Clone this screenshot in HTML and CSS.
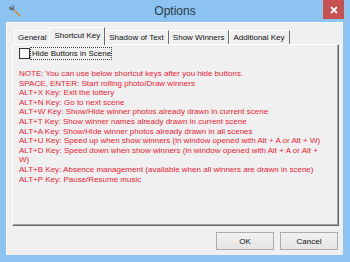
FILE: index.html
```html
<!DOCTYPE html>
<html>
<head>
<meta charset="utf-8">
<link rel="stylesheet" href="styles.css">
</head>
<body>
<div class="window">
  <div class="titlebar">
    <div class="tb-left">
      <svg class="app-icon" width="12" height="12" viewBox="0 0 12 12">
        <path d="M1.2 1.2 L3 3 L4.2 1.8 L2.4 0 C3.6 -0.2 5.2 0.8 5.2 2.4 C5.2 2.9 5.1 3.3 4.9 3.6 L5.8 4.6 L4.6 5.8 L3.6 4.9 C3.3 5.1 2.9 5.2 2.4 5.2 C0.8 5.2 -0.2 3.6 0 2.4 Z" fill="#6b6f78"/>
        <path d="M5 5.8 L5.8 5 L11.2 10.2 C11.6 10.6 11.4 11.2 11 11.4 C10.6 11.6 10.2 11.4 9.9 11.1 Z" fill="#f19a1c"/>
        <path d="M6.4 6.4 L10.6 10.6" stroke="#c9640c" stroke-width="0.8"/>
      </svg>
    </div>
    <div class="title">Options</div>
    <div class="tb-right">
      <div class="close">
        <svg width="8" height="8" viewBox="0 0 8 8"><path d="M1 1 L7 7 M7 1 L1 7" stroke="#fff" stroke-width="1.8"/></svg>
      </div>
    </div>
  </div>
  <div class="client">
    <div class="tabs">
      <div class="tab">General</div>
      <div class="tab active">Shortcut Key</div>
      <div class="tab">Shadow of Text</div>
      <div class="tab">Show Winners</div>
      <div class="tab">Additional Key</div>
    </div>
    <div class="panel">
      <label class="check-row">
        <span class="checkbox"></span>
        <span class="check-label">Hide Buttons in Scene</span>
      </label>
      <div class="notes">
        <p>NOTE: You can use below shortcut keys after you hide buttons.</p>
        <p>SPACE, ENTER: Start rolling photo/Draw winners</p>
        <p>ALT+X Key: Exit the lottery</p>
        <p>ALT+N Key: Go to next scene</p>
        <p>ALT+W Key: Show/Hide winner photos already drawn in current scene</p>
        <p>ALT+T Key: Show winner names already drawn in current scene</p>
        <p>ALT+A Key: Show/Hide winner photos already drawn in all scenes</p>
        <p>ALT+U Key: Speed up when show winners (in window opened with Alt + A or Alt + W)</p>
        <p>ALT+D Key: Speed down when show winners (in window opened with Alt + A or Alt + W)</p>
        <p>ALT+B Key: Absence management (available when all winners are drawn in scene)</p>
        <p>ALT+P Key: Pause/Resume music</p>
      </div>
    </div>
    <div class="buttons">
      <button class="btn">OK</button>
      <button class="btn">Cancel</button>
    </div>
  </div>
</div>
</body>
</html>
```
FILE: styles.css
```css
html, body {
  margin: 0;
  padding: 0;
}
body {
  width: 350px;
  height: 262px;
  overflow: hidden;
  font-family: "Liberation Sans", Arial, sans-serif;
}
.window {
  width: 350px;
  height: 262px;
  background: #8dc3f1;
  display: flex;
  flex-direction: column;
  box-sizing: border-box;
}
.titlebar {
  height: 22px;
  display: grid;
  grid-template-columns: 1fr auto 1fr;
  align-items: start;
  flex: none;
}
.tb-left {
  padding: 5px 0 0 9px;
}
.app-icon {
  display: block;
}
.title {
  font-size: 12px;
  color: #2b3947;
  padding-top: 5px;
  line-height: 13px;
}
.tb-right {
  display: flex;
  justify-content: flex-end;
  padding-right: 6px;
}
.close {
  width: 21px;
  height: 19px;
  background: #c75050;
  display: flex;
  align-items: center;
  justify-content: center;
}
.client {
  flex: 1;
  margin: 0 7px 7px 6px;
  background: #f0f0f0;
  border-left: 1px solid #fbfbfb;
  border-top: 1px solid #fbfbfb;
  display: flex;
  flex-direction: column;
  padding: 4px 4px 0 5px;
  box-sizing: border-box;
}
.tabs {
  display: flex;
  align-items: flex-end;
  height: 17px;
  padding-left: 2px;
  position: relative;
  z-index: 1;
}
.tab {
  font-size: 8px;
  color: #111;
  height: 14px;
  line-height: 14px;
  padding: 0 4px 0 3px;
  border-right: 1px solid #6a6a6a;
  border-left: 1px solid #fff;
  border-top: 1px solid #fff;
  box-sizing: border-box;
  white-space: nowrap;
}
.tab:first-child {
  border-right: none;
}
.tab.active {
  height: 18px;
  margin-bottom: -1px;
  margin-left: -1px;
  padding: 1px 4px 0 4px;
  line-height: 13px;
  background: #f0f0f0;
  border-left: 1px solid #fff;
}
.panel {
  height: 182px;
  border-top: 1px solid #fff;
  border-left: 1px solid #fff;
  border-right: 1px solid #696969;
  border-bottom: 1px solid #696969;
  box-shadow: inset -1px -1px 0 #a0a0a0;
  box-sizing: border-box;
  padding: 1px 0 0 6px;
  flex: none;
}
.check-row {
  display: flex;
  align-items: center;
  height: 13px;
  margin-top: 1px;
}
.checkbox {
  width: 11px;
  height: 11px;
  box-sizing: border-box;
  border: 1px solid #333;
  background: #fafafa;
  flex: none;
}
.check-label {
  font-size: 8px;
  color: #111;
  border: 1px dotted #444;
  padding: 0 0 0 1px;
  line-height: 11px;
  height: 13px;
  box-sizing: border-box;
}
.notes {
  margin-top: 9px;
  color: #ee2236;
  font-size: 8px;
  line-height: 9.6px;
  padding-right: 14px;
}
.notes p {
  margin: 0;
}
.buttons {
  display: flex;
  justify-content: flex-end;
  gap: 6px;
  padding: 6px 1px 0 0;
}
.btn {
  width: 58px;
  height: 18px;
  font-family: "Liberation Sans", Arial, sans-serif;
  font-size: 8px;
  color: #111;
  border: 1px solid #acacac;
  background: linear-gradient(#f2f2f2, #e4e4e4);
  padding: 0;
  margin: 0;
}
```
